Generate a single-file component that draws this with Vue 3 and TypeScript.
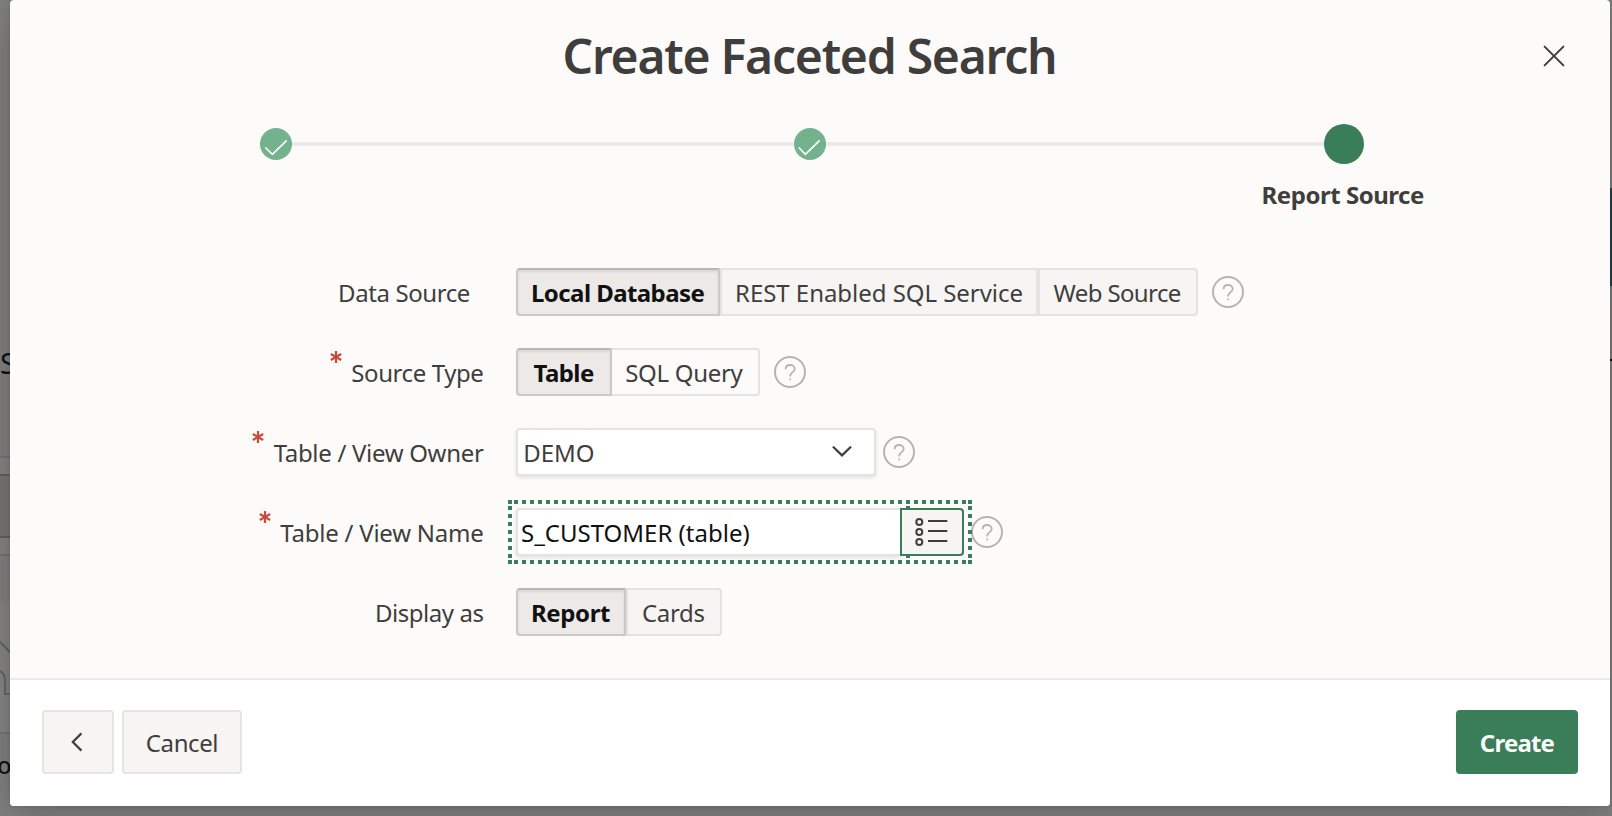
<script setup lang="ts">
interface Option {
  text: string
  width: number
  pad: number
  tracking: number
  selected?: boolean
  plain?: boolean
}

const dataSource: Option[] = [
  { text: 'Local Database', width: 204, pad: 13, tracking: -0.57, selected: true },
  { text: 'REST Enabled SQL Service', width: 318, pad: 13, tracking: -0.04 },
  { text: 'Web Source', width: 160, pad: 13.5, tracking: -0.62 }
]
const sourceType: Option[] = [
  { text: 'Table', width: 96, pad: 15.5, tracking: -0.55, selected: true },
  { text: 'SQL Query', width: 148, pad: 13.2, tracking: -0.3, plain: true }
]
const displayAs: Option[] = [
  { text: 'Report', width: 110, pad: 13, tracking: -0.4, selected: true },
  { text: 'Cards', width: 96, pad: 14, tracking: -0.35 }
]

interface Row {
  label: string
  tracking: number
  kind: 'group' | 'select' | 'lov'
  required?: boolean
  optional?: boolean
  options?: Option[]
  helpGap?: number
}

const rows: Row[] = [
  { label: 'Data Source', tracking: -0.4, kind: 'group', optional: true, options: dataSource, helpGap: 13.5 },
  { label: 'Source Type', tracking: -0.4, kind: 'group', required: true, options: sourceType, helpGap: 13.5 },
  { label: 'Table / View Owner', tracking: -0.31, kind: 'select', required: true, helpGap: 7.4 },
  { label: 'Table / View Name', tracking: -0.24, kind: 'lov', required: true, helpGap: 7.4 },
  { label: 'Display as', tracking: -0.45, kind: 'group', options: displayAs }
]
</script>

<template>
  <div class="page">
    <svg class="behind" width="12" height="816" viewBox="0 0 12 816" aria-hidden="true">
      <rect x="0" y="456" width="12" height="20" fill="#85827f" />
      <rect x="0" y="476" width="12" height="60" fill="#787672" />
      <rect x="0" y="536" width="12" height="20" fill="#85827f" />
      <rect x="0" y="604" width="12" height="128" fill="#848484" />
      <path d="M0 457h12M0 555h12M0 733h12" stroke="#737373" stroke-width="2" />
      <path d="M0 475h12M0 537h12" stroke="#62605e" stroke-width="2" />
      <path d="M-2 640L12 654M-4 670Q5 671 5 680V694H12" fill="none" stroke="#646464" stroke-width="2" />
    </svg>
    <span class="peek peek-s">S</span>
    <span class="peek peek-o">o</span>
    <div class="edge"></div>

    <section class="dialog">
      <header class="head">
        <h1>Create Faceted Search</h1>
        <svg class="close" width="22" height="22" viewBox="0 0 22 22">
          <path d="M1.6 1.6L20.4 20.4M20.4 1.6L1.6 20.4" />
        </svg>
      </header>

      <div class="wizard">
        <div class="step done">
          <svg width="32" height="32" viewBox="0 0 32 32"><path d="M5.8 20L12.4 26.4L26.2 12.8" /></svg>
        </div>
        <div class="bar"></div>
        <div class="step done">
          <svg width="32" height="32" viewBox="0 0 32 32"><path d="M5.2 20L11.4 26.4L25.2 12.8" /></svg>
        </div>
        <div class="bar"></div>
        <div class="step current"></div>
      </div>
      <div class="step-label"><span>Report Source</span></div>

      <div class="form">
        <div v-for="row in rows" :key="row.label" class="row">
          <div class="label" :class="{ optional: row.optional }">
            <svg v-if="row.required" class="star" width="12" height="12" viewBox="0 0 12 12">
              <path d="M6 0V12M0.8 3L11.2 9M11.2 3L0.8 9" />
            </svg>
            <span :style="{ letterSpacing: row.tracking + 'px' }">{{ row.label }}</span>
          </div>

          <div v-if="row.kind === 'group'" class="group">
            <button
              v-for="o in row.options"
              :key="o.text"
              type="button"
              :class="{ selected: o.selected, plain: o.plain }"
              :style="{ width: o.width + 'px', paddingLeft: o.pad + 'px', letterSpacing: o.tracking + 'px' }"
            >{{ o.text }}</button>
          </div>

          <div v-else-if="row.kind === 'select'" class="select">
            <span>DEMO</span>
            <svg width="20" height="12" viewBox="0 0 20 12"><path d="M1.6 1.2L10 9.4L18.4 1.2" /></svg>
          </div>

          <div v-else class="lov">
            <svg class="focus" width="464" height="64" viewBox="0 0 464 64">
              <g class="dots">
                <path d="M0 2H4M460 2H464M0 62H4M460 62H464" />
                <path d="M6 2H458" stroke-dasharray="4 4" />
                <path d="M6 62H458" stroke-dasharray="4 4" />
                <path d="M2 6V58" stroke-dasharray="4 4" />
                <path d="M462 6V58" stroke-dasharray="4 4" />
                <path d="M400 6V10M400 54V58" />
              </g>
            </svg>
            <div class="field">S_CUSTOMER (table)</div>
            <div class="picker">
              <svg width="34" height="30" viewBox="0 0 34 30">
                <circle cx="4.3" cy="5" r="3" /><circle cx="4.3" cy="15" r="3" /><circle cx="4.3" cy="25" r="3" />
                <path d="M13 4H32.3M13 14H32.3M13 24H32.3" />
              </svg>
            </div>
          </div>

          <svg
            v-if="row.helpGap"
            class="help"
            :style="{ marginLeft: row.helpGap + 'px' }"
            width="32"
            height="32"
            viewBox="0 0 32 32"
          >
            <circle cx="16" cy="16" r="15" />
            <path d="M11.6 13.2C11.6 10.6 13.6 9 16.2 9C18.8 9 20.7 10.7 20.7 13C20.7 16.2 16.2 16.2 16.2 20V20.4M16.2 22.6V24.2" />
          </svg>
        </div>
      </div>

      <footer class="foot">
        <button type="button" class="btn back" aria-label="Back">
          <svg width="12" height="20" viewBox="0 0 12 20"><path d="M10.4 1.4L1.8 10L10.4 18.6" /></svg>
        </button>
        <button type="button" class="btn">Cancel</button>
        <button type="button" class="btn create">Create</button>
      </footer>
    </section>
  </div>
</template>

<style>
body {
  margin: 0;
  overflow: hidden;
}
</style>

<style scoped>
.page,
.page * {
  box-sizing: border-box;
}
.page {
  position: relative;
  width: 1612px;
  height: 816px;
  padding-left: 10px;
  overflow: hidden;
  background: #808080;
  color: #3f3e3c;
  font: 400 24px/48px "Noto Sans", "Open Sans", sans-serif;
}
button {
  font: inherit;
  color: inherit;
}
svg {
  display: block;
  flex: none;
}
.behind {
  position: absolute;
  left: 0;
  top: 0;
}
.peek {
  position: absolute;
  color: #111;
}
.peek-s {
  left: 0;
  top: 339px;
  font-size: 29px;
}
.peek-o {
  left: -3px;
  top: 741px;
  font-weight: 500;
}
.edge {
  position: absolute;
  right: 0;
  top: 188px;
  width: 2px;
  height: 173px;
  background: linear-gradient(#22444c 0 98px, #7c7c7c 98px 171px, #111 171px);
}
.dialog {
  position: relative;
  width: 1600px;
  height: 806px;
  background: #fcfbfa;
  border-radius: 4px;
  box-shadow: 0 8px 40px rgba(0, 0, 0, 0.22), 0 0 4px rgba(0, 0, 0, 0.12);
  display: flex;
  flex-direction: column;
}
.head {
  height: 112px;
  flex: none;
  display: flex;
  justify-content: center;
  position: relative;
}
h1 {
  margin: 0;
  padding-right: 1px;
  font-size: 48px;
  font-weight: 600;
  line-height: 112px;
  letter-spacing: -1.25px;
}
.close {
  position: absolute;
  right: 45px;
  top: 45px;
  fill: none;
  stroke: #3f3e3c;
  stroke-width: 2;
  stroke-linecap: round;
}
.wizard {
  flex: none;
  height: 64px;
  margin: 0 246px 0 250px;
  display: flex;
  align-items: center;
}
.bar {
  flex: 1;
  height: 4px;
  background: #ebeae8;
}
.step {
  width: 32px;
  height: 32px;
  border-radius: 50%;
  background: #74b18d;
}
.step svg {
  fill: none;
  stroke: #fff;
  stroke-width: 1.7;
  stroke-linecap: round;
}
.bar:nth-child(2) {
  flex: 0 0 502px;
}
.current {
  width: 40px;
  height: 40px;
  background: #397e58;
}
.step-label {
  flex: none;
  height: 92px;
  padding-left: 1251.6px;
  line-height: 38px;
  font-weight: 700;
  letter-spacing: -0.47px;
  white-space: nowrap;
}
.form {
  flex: none;
  height: 410px;
}
.row {
  height: 80px;
  display: flex;
  align-items: flex-start;
}
.label {
  width: 506px;
  height: 48px;
  padding-right: 32.5px;
  display: flex;
  justify-content: flex-end;
  line-height: 50px;
  white-space: nowrap;
}
.label.optional {
  padding-right: 46px;
}
.star {
  margin: 2.5px 9.5px 0 0;
  fill: none;
  stroke: #cb4a36;
  stroke-width: 2.2;
}
.group {
  display: flex;
}
.group button {
  height: 48px;
  padding: 2px 0 0;
  border: 2px solid #e4e3e1;
  background: #f6f5f3;
  line-height: 42px;
  text-align: left;
  white-space: nowrap;
}
.group button:first-child {
  border-radius: 4px 0 0 4px;
}
.group button:last-child {
  border-radius: 0 4px 4px 0;
}
.group .plain {
  background: #fcfbfa;
  border-left-width: 0;
}
.group .selected {
  border-color: #b9b7b5 #cbc9c7 #cbc9c7;
  background: #ece9e7;
  color: #111;
  font-weight: 700;
  box-shadow: inset 0 2px 3px rgba(0, 0, 0, 0.08);
}
.select {
  width: 360px;
  height: 48px;
  padding: 0 22px 0 5.2px;
  border: 2px solid #e4e3e1;
  border-radius: 4px;
  background: #fff;
  box-shadow: 0 2px 4px rgba(0, 0, 0, 0.1);
  display: flex;
  align-items: center;
  justify-content: space-between;
  line-height: 44px;
}
.select span {
  padding-top: 2px;
}
.select svg {
  fill: none;
  stroke: #3f3e3c;
  stroke-width: 2.2;
  stroke-linecap: round;
}
.lov {
  position: relative;
  width: 448px;
  height: 48px;
  display: flex;
}
.focus {
  position: absolute;
  left: -8px;
  top: -8px;
}
.dots {
  fill: none;
  stroke: #397e58;
  stroke-width: 4;
}
.field {
  width: 384px;
  height: 48px;
  padding-left: 3px;
  border: 2px solid #e4e3e1;
  border-right: 0;
  border-radius: 4px 0 0 4px;
  background: #fff;
  box-shadow: 0 2px 4px rgba(0, 0, 0, 0.1);
  color: #111;
  line-height: 46px;
}
.picker {
  position: relative;
  width: 64px;
  height: 48px;
  padding: 7px 0 0 13px;
  border: 2px solid #397e58;
  border-radius: 0 4px 4px 0;
  background: #f6f5f3;
}
.picker svg {
  fill: none;
  stroke: #3f3e3c;
  stroke-width: 2;
}
.help {
  margin-top: 8px;
  fill: none;
  stroke: #b5b4b2;
  stroke-width: 2;
}
.help path {
  stroke-width: 1.8;
}
.foot {
  flex: 1;
  padding: 30px 32px 0;
  border-top: 2px solid #e9e9e9;
  border-radius: 0 0 4px 4px;
  background: #fff;
  display: flex;
}
.btn {
  width: 120px;
  height: 64px;
  padding: 2px 0 0;
  border: 2px solid #e6e3e0;
  border-radius: 4px;
  background: #f6f5f3;
  letter-spacing: -0.4px;
  line-height: 58px;
}
.back {
  width: 72px;
  margin-right: 8px;
  padding: 0;
  display: flex;
  align-items: center;
  justify-content: center;
}
.back svg {
  fill: none;
  stroke: #3f3e3c;
  stroke-width: 2.2;
  margin-right: 2px;
}
.create {
  width: 122px;
  margin-left: auto;
  border-color: #397e58;
  background: #397e58;
  color: #fcfbfa;
  font-weight: 700;
  letter-spacing: -0.8px;
}
</style>
